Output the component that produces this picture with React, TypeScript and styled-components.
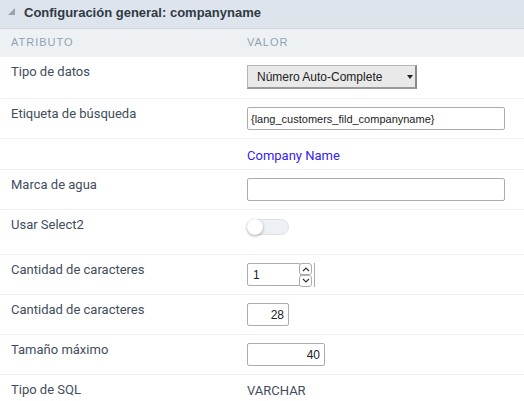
import styled, {createGlobalStyle} from "styled-components";

const GlobalStyle = createGlobalStyle`
  html, body {
    margin: 0;
    padding: 0;
    background: #ffffff;
  }
  body {
    font-family: "Liberation Sans", Arial, sans-serif;
  }
`

type row = {
    label: string,
    height: number,
    value: React.ReactNode
}

export default function App() {

    const rows: row[] = [
        {
            label: "Tipo de datos", height: 41,
            value: <StyledSelect>
                <span>Número Auto-Complete</span>
                <StyledCaret/>
            </StyledSelect>
        },
        {
            label: "Etiqueta de búsqueda", height: 40,
            value: <StyledInput $width={258} $pad={3} $size={11} readOnly value="{lang_customers_fild_companyname}"/>
        },
        {
            label: "", height: 31,
            value: <StyledLink>Company Name</StyledLink>
        },
        {
            label: "Marca de agua", height: 40,
            value: <StyledInput $width={258} readOnly value=""/>
        },
        {
            label: "Usar Select2", height: 45,
            value: <StyledSwitch><StyledKnob/></StyledSwitch>
        },
        {
            label: "Cantidad de caracteres", height: 40,
            value: <StyledSpinner>
                <StyledInput $width={54} $pad={5} readOnly value="1"/>
                <StyledSpinButtons>
                    <StyledSpinButton>
                        <svg width="8" height="6" viewBox="0 0 8 6">
                            <path d="M1 5 L4 2 L7 5" fill="none" stroke="#333" strokeWidth="1.2"/>
                        </svg>
                    </StyledSpinButton>
                    <StyledSpinButton>
                        <svg width="8" height="6" viewBox="0 0 8 6">
                            <path d="M1 1 L4 4 L7 1" fill="none" stroke="#333" strokeWidth="1.2"/>
                        </svg>
                    </StyledSpinButton>
                </StyledSpinButtons>
            </StyledSpinner>
        },
        {
            label: "Cantidad de caracteres", height: 40,
            value: <StyledInput $width={42} $right readOnly value="28"/>
        },
        {
            label: "Tamaño máximo", height: 40,
            value: <StyledInput $width={78} $right readOnly value="40"/>
        },
        {
            label: "Tipo de SQL", height: 40,
            value: <StyledText>VARCHAR</StyledText>
        },
    ]

    return <>
        <GlobalStyle/>
        <StyledPanel>
            <StyledTitleBar>
                <svg width="8" height="8" viewBox="0 0 8 8">
                    <path d="M7 0 L7 7 L0 7 Z" fill="#9aa3ad"/>
                </svg>
                <StyledTitle>Configuración general: companyname</StyledTitle>
            </StyledTitleBar>
            <StyledHeadRow>
                <StyledHeadCell>Atributo</StyledHeadCell>
                <StyledHeadCell>Valor</StyledHeadCell>
            </StyledHeadRow>
            {rows.map((r, i) =>
                <StyledRow key={i} $height={r.height} $first={i === 0}>
                    <StyledLabel>{r.label}</StyledLabel>
                    <StyledValue>{r.value}</StyledValue>
                </StyledRow>
            )}
        </StyledPanel>
    </>
}

const StyledPanel = styled.div`
  width: 524px;
  background: #ffffff;
`

const StyledTitleBar = styled.div`
  height: 29px;
  box-sizing: border-box;
  display: flex;
  align-items: center;
  gap: 8px;
  padding: 0 0 4px 8px;
  background: #dee4eb;
  border-bottom: 1px solid #cfd6de;
`

const StyledTitle = styled.span`
  font-size: 13px;
  font-weight: bold;
  color: #2f3a45;
`

const StyledHeadRow = styled.div`
  height: 28px;
  box-sizing: border-box;
  display: grid;
  grid-template-columns: 236px 1fr;
  align-items: center;
  padding: 0 11px 2px;
  background: #eef1f4;
`

const StyledHeadCell = styled.div`
  font-size: 11px;
  letter-spacing: 1px;
  text-transform: uppercase;
  color: #8ea3b3;
`

const StyledRow = styled.div<{ $height: number, $first: boolean }>`
  height: ${p => p.$height}px;
  box-sizing: border-box;
  display: grid;
  grid-template-columns: 236px 1fr;
  padding: 0 11px;
  border-top: ${p => p.$first ? "none" : "1px solid #eceff5"};
`

const StyledLabel = styled.div`
  font-family: Roboto, "Liberation Sans", sans-serif;
  font-size: 13px;
  line-height: 15px;
  color: #414d5c;
  padding-top: 7px;
`

const StyledValue = styled.div`
  padding-top: 8px;
  display: flex;
  align-items: flex-start;
`

const StyledSelect = styled.div`
  width: 170px;
  height: 24px;
  box-sizing: border-box;
  display: flex;
  align-items: center;
  justify-content: space-between;
  padding: 0 2px 0 9px;
  background: #e9e9e9;
  border: 1px solid #b5b5b5;
  border-right: 2px solid #8a8a8a;
  border-bottom: 2px solid #9a9a9a;
  font-size: 12px;
  color: #222;
`

const StyledCaret = styled.span`
  width: 0;
  height: 0;
  border-left: 3px solid transparent;
  border-right: 3px solid transparent;
  border-top: 4px solid #222;
`

const StyledInput = styled.input<{ $width: number, $right?: boolean, $pad?: number, $size?: number }>`
  width: ${p => p.$width}px;
  height: 23px;
  box-sizing: border-box;
  margin: 0;
  padding: 0 4px 0 ${p => p.$pad ?? 4}px;
  border: 1px solid #a9adb3;
  border-radius: 2px;
  font-family: "Liberation Sans", Arial, sans-serif;
  font-size: ${p => p.$size ?? 12}px;
  color: #222;
  text-align: ${p => p.$right ? "right" : "left"};
  background: #fff;
  outline: none;
`

const StyledLink = styled.span`
  font-family: Roboto, "Liberation Sans", sans-serif;
  font-size: 13px;
  line-height: 15px;
  color: #3322f2;
  padding-top: 1px;
`

const StyledText = styled.span`
  font-family: Roboto, "Liberation Sans", sans-serif;
  font-size: 13px;
  line-height: 15px;
  color: #414d5c;
`

const StyledSwitch = styled.div`
  width: 42px;
  height: 16px;
  box-sizing: border-box;
  margin-top: 1px;
  border-radius: 8px;
  background: #eef1f4;
  border: 1px solid #dde2e8;
  position: relative;
`

const StyledKnob = styled.div`
  position: absolute;
  left: -1px;
  top: -1px;
  width: 16px;
  height: 16px;
  border-radius: 50%;
  background: #fff;
  box-shadow: 0 1px 3px rgba(0, 0, 0, 0.35);
`

const StyledSpinner = styled.div`
  display: flex;
  align-items: flex-start;
  height: 24px;
  border-right: 1px solid #a9adb3;
  padding-right: 2px;
`

const StyledSpinButtons = styled.div`
  display: flex;
  flex-direction: column;
  margin-left: -2px;
`

const StyledSpinButton = styled.div`
  width: 13px;
  height: 12px;
  box-sizing: border-box;
  display: flex;
  align-items: center;
  justify-content: center;
  border: 1px solid #a9adb3;
  border-radius: 3px;
  background: #fff;
`
